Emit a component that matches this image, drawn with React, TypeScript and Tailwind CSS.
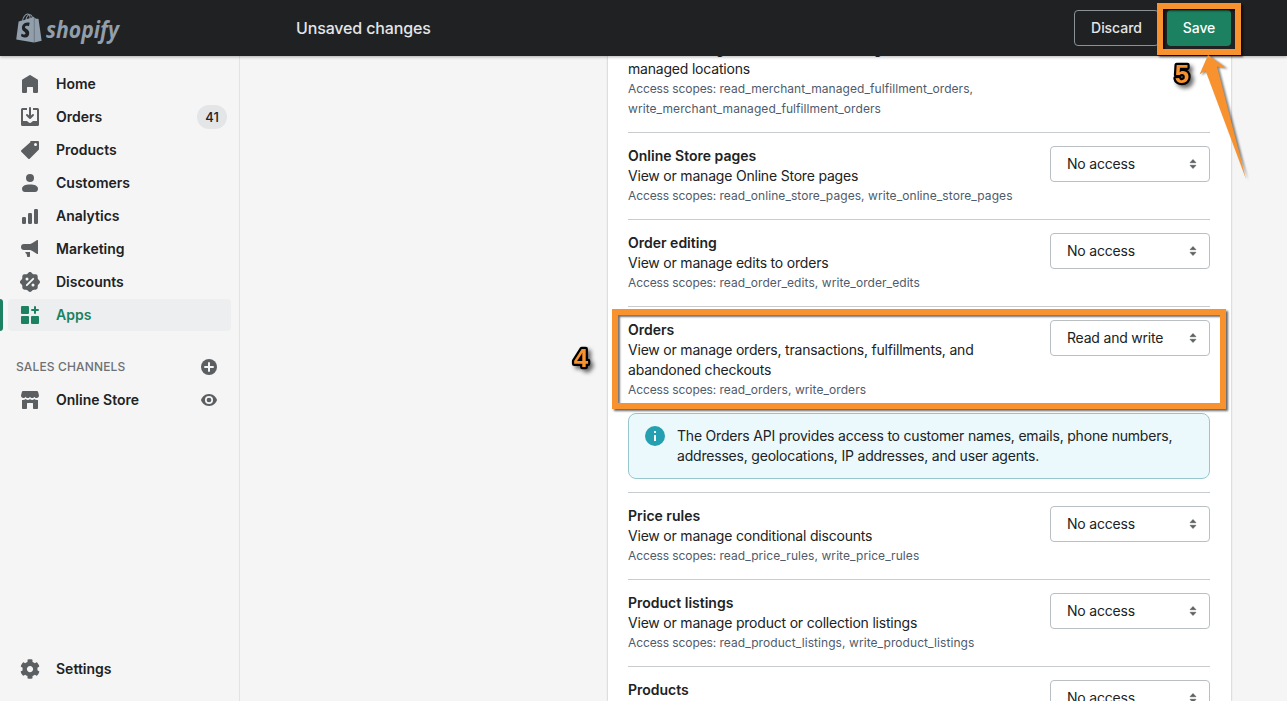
import React from "react";
import { FaCog, FaShopify } from "react-icons/fa";

type IconProps = { children: React.ReactNode };

const Icon = ({ children }: IconProps) => (
  <svg viewBox="0 0 20 20" className="h-5 w-5 shrink-0" fill="currentColor" fillRule="evenodd">
    {children}
  </svg>
);

const icons = {
  home: (
    <Icon>
      <path d="M10.6 1.2l7 4.4c.25.15.4.4.4.7v11.4c0 .7-.6 1.3-1.3 1.3h-2.4c-.7 0-1.3-.6-1.3-1.3v-4.2c0-.3-.2-.5-.5-.5h-5c-.3 0-.5.2-.5.5v4.2c0 .7-.6 1.3-1.3 1.3H3.3C2.6 19 2 18.4 2 17.7V6.3c0-.3.15-.55.4-.7l7-4.4a1.1 1.1 0 0 1 1.2 0z" />
    </Icon>
  ),
  orders: (
    <Icon>
      <path d="M11 1a1 1 0 1 0-2 0v7.586L7.707 7.293a1 1 0 0 0-1.414 1.414l3 3a1 1 0 0 0 1.414 0l3-3a1 1 0 0 0-1.414-1.414L11 8.586V1z" />
      <path d="M3 14V3h4V1H2.5A1.5 1.5 0 0 0 1 2.5v15A1.5 1.5 0 0 0 2.5 19h15a1.5 1.5 0 0 0 1.5-1.5v-15A1.5 1.5 0 0 0 17.5 1H13v2h4v11h-3.5c-.775 0-1.388.662-1.926 1.244l-.11.12A1.994 1.994 0 0 1 10 16a1.994 1.994 0 0 1-1.463-.637l-.111-.12C7.888 14.664 7.275 14 6.5 14H3z" />
    </Icon>
  ),
  products: (
    <Icon>
      <path d="M10.293 1.293A1 1 0 0 1 11 1h7a1 1 0 0 1 1 1v7a1 1 0 0 1-.293.707l-9 9a1 1 0 0 1-1.414 0l-7-7a1 1 0 0 1 0-1.414l9-8zM15.5 6a1.5 1.5 0 1 0 0-3 1.5 1.5 0 0 0 0 3z" />
    </Icon>
  ),
  customers: (
    <Icon>
      <circle cx="10" cy="5" r="4" />
      <path d="M2 15.7C2 13 5.200 11.500 10 11.500s8 1.500 8 4.200c0 1.700-.9 3.300-3 3.300H5c-2.100 0-3-1.600-3-3.300z" />
    </Icon>
  ),
  analytics: (
    <Icon>
      <rect x="2" y="11" width="4" height="7" rx="1.2" />
      <rect x="8" y="7" width="4" height="11" rx="1.2" />
      <rect x="14" y="3" width="4" height="15" rx="1.2" />
    </Icon>
  ),
  marketing: (
    <Icon>
      <path d="M18 1.500v13c0 .5-.5.7-.9.4l-4.300-2.700C11.500 11.300 10.500 11 9 11H4a3 3 0 0 1 0-6h5c1.500 0 2.500-.3 3.800-1.200l4.300-2.700c.4-.3.9 0 .9.400zM5.400 13H10v4.200a.8.8 0 0 1-.8.8H7.800a.8.8 0 0 1-.8-.8c0-1.700-.4-2.400-1.600-3.200V13z" />
    </Icon>
  ),
  discounts: (
    <Icon>
      <path d="M11.566.66a2.189 2.189 0 0 0-3.132 0l-.962.985a2.189 2.189 0 0 1-1.592.66l-1.377-.017a2.189 2.189 0 0 0-2.215 2.215l.016 1.377a2.19 2.19 0 0 1-.66 1.592l-.984.962a2.189 2.189 0 0 0 0 3.132l.985.962c.428.418.667.994.66 1.592l-.017 1.377a2.189 2.189 0 0 0 2.215 2.215l1.377-.016a2.189 2.189 0 0 1 1.592.66l.962.984c.859.88 2.273.88 3.132 0l.962-.985a2.19 2.19 0 0 1 1.592-.66l1.377.017a2.189 2.189 0 0 0 2.215-2.215l-.016-1.377a2.19 2.19 0 0 1 .66-1.592l.984-.962c.88-.859.88-2.273 0-3.132l-.985-.962a2.189 2.189 0 0 1-.66-1.592l.017-1.377a2.189 2.189 0 0 0-2.215-2.215l-1.377.016a2.189 2.189 0 0 1-1.592-.66L11.566.66z" />
      <path d="M6.800 13.200l6.400-6.400" stroke="#f5f5f5" strokeWidth="1.900" strokeLinecap="round" />
      <circle cx="7" cy="7" r="1.500" fill="#f5f5f5" />
      <circle cx="13" cy="13" r="1.500" fill="#f5f5f5" />
    </Icon>
  ),
  apps: (
    <Icon>
      <rect x="1" y="1" width="8" height="8" rx="1" />
      <rect x="1" y="11" width="8" height="8" rx="1" />
      <rect x="11" y="11" width="8" height="8" rx="1" />
      <path d="M15 2v6M12 5h6" stroke="currentColor" strokeWidth="2" strokeLinecap="round" />
    </Icon>
  ),
  store: (
    <Icon>
      <path d="M3.300 1h13.400c.7 0 1.300.5 1.500 1.200L19 5.600C19 7 18 8 16.600 8c-1 0-1.800-.5-2.200-1.300C14 7.500 13.200 8 12.200 8S10.400 7.500 10 6.700C9.600 7.500 8.800 8 7.800 8S6 7.500 5.600 6.700C5.200 7.500 4.400 8 3.400 8 2 8 1 7 1 5.600l.8-3.400C2 1.500 2.600 1 3.300 1z" />
      <path d="M2 10c1.500.3 2.800-.1 3.700-1 1.300 1.200 3 1.200 4.300 0 1.300 1.200 3 1.200 4.300 0 .9.900 2.200 1.300 3.700 1v8c0 .6-.4 1-1 1h-3c-.6 0-1-.4-1-1v-4.500c0-.3-.2-.5-.5-.5h-5c-.3 0-.5.2-.5.500V18c0 .6-.4 1-1 1H3c-.6 0-1-.4-1-1z" />
    </Icon>
  ),
};

const nav = [
  { label: "Home", icon: icons.home },
  { label: "Orders", icon: icons.orders, badge: "41" },
  { label: "Products", icon: icons.products },
  { label: "Customers", icon: icons.customers },
  { label: "Analytics", icon: icons.analytics },
  { label: "Marketing", icon: icons.marketing },
  { label: "Discounts", icon: icons.discounts },
  { label: "Apps", icon: icons.apps, active: true },
];

type Scope = {
  title?: string;
  lines: string[];
  scopes: string[];
  access?: string;
  notice?: string[];
  marker?: string;
};

const scopes: Scope[] = [
  {
    lines: ["View or manage fulfillment orders assigned to merchant-", "managed locations"],
    scopes: ["read_merchant_managed_fulfillment_orders,", "write_merchant_managed_fulfillment_orders"],
  },
  {
    title: "Online Store pages",
    lines: ["View or manage Online Store pages"],
    scopes: ["read_online_store_pages, write_online_store_pages"],
    access: "No access",
  },
  {
    title: "Order editing",
    lines: ["View or manage edits to orders"],
    scopes: ["read_order_edits, write_order_edits"],
    access: "No access",
  },
  {
    title: "Orders",
    lines: ["View or manage orders, transactions, fulfillments, and", "abandoned checkouts"],
    scopes: ["read_orders, write_orders"],
    access: "Read and write",
    notice: [
      "The Orders API provides access to customer names, emails, phone numbers,",
      "addresses, geolocations, IP addresses, and user agents.",
    ],
    marker: "4",
  },
  {
    title: "Price rules",
    lines: ["View or manage conditional discounts"],
    scopes: ["read_price_rules, write_price_rules"],
    access: "No access",
  },
  {
    title: "Product listings",
    lines: ["View or manage product or collection listings"],
    scopes: ["read_product_listings, write_product_listings"],
    access: "No access",
  },
  {
    title: "Products",
    lines: [],
    scopes: [],
    access: "No access",
  },
];

const Marker = ({ n }: { n: string }) => (
  <svg width="36" height="40" viewBox="0 0 36 40" className="overflow-visible">
    <text
      x="18"
      y="27"
      textAnchor="middle"
      className="fill-[#f7922f] stroke-black font-['Liberation_Sans',sans-serif] text-[26px] font-bold [filter:drop-shadow(3px_3px_2px_rgba(0,0,0,0.6))] [paint-order:stroke]"
      strokeWidth="4.500"
      strokeLinejoin="round"
    >
      {n}
    </text>
  </svg>
);

const AccessSelect = ({ value }: { value: string }) => (
  <button className="flex h-9 w-40 shrink-0 items-center justify-between rounded border border-[#babfc3] bg-white pr-3 pl-4 text-left tracking-[-0.2px]">
    <span>{value}</span>
    <svg width="8" height="10" viewBox="0 0 8 10" fill="#5c5f62">
      <path d="M1 3.700h6L4 .5zM1 6.300h6L4 9.500z" stroke="#5c5f62" strokeWidth=".6" strokeLinejoin="round" />
    </svg>
  </button>
);

const ScopeRow = ({ s }: { s: Scope }) => (
  <section className="border-t border-[#c9cccf] py-[13px]">
    <div className="relative flex items-start justify-between">
      <div className="whitespace-nowrap">
        {s.title && <h3 className="font-semibold">{s.title}</h3>}
        {s.lines.map((l) => (
          <p key={l} className="tracking-[-0.2px]">
            {l}
          </p>
        ))}
        <div className="text-xs leading-5 tracking-[0.07px] text-[#4f5b6b]">
          {s.scopes.map((l, i) => (
            <p key={l}>
              {i === 0 && <span className="tracking-[-0.1px]">Access scopes: </span>}
              {l}
            </p>
          ))}
        </div>
      </div>
      {s.access && <AccessSelect value={s.access} />}
      {s.marker && (
        <>
          <div className="pointer-events-none absolute -top-[11px] -left-4 z-10 h-[100px] w-[614px] border-6 border-[#f7922f] shadow-[2px_2px_2px_rgba(0,0,0,0.6),inset_2px_2px_2px_rgba(0,0,0,0.55)]" />
          <div className="absolute top-5 -left-[65px]">
            <Marker n={s.marker} />
          </div>
        </>
      )}
    </div>
    {s.notice && (
      <div className="mt-[13px] flex gap-3 rounded-lg border border-[#98c6cd] bg-[#ebf9fc] px-4 py-3">
        <svg width="20" height="20" viewBox="0 0 20 20" className="shrink-0">
          <circle cx="10" cy="10" r="10" fill="#24a0b0" />
          <path d="M9 5h2v2H9zM9 9h2v6H9z" fill="#fff" />
        </svg>
        <div className="tracking-[-0.2px] whitespace-nowrap">
          {s.notice.map((l) => (
            <p key={l}>{l}</p>
          ))}
        </div>
      </div>
    )}
  </section>
);

export default function App() {
  return (
    <div className="flex h-[701px] w-[1287px] flex-col overflow-hidden bg-[#f5f5f5] font-['Inter',sans-serif] text-sm leading-5 text-[#202223]">
      <header className="relative z-20 flex h-14 shrink-0 items-center bg-[#202123] pr-14 pl-4 text-[#e3e5e7] shadow-[0_1px_3px_rgba(0,0,0,0.3)]">
        <div className="flex w-[280px] items-center gap-1 text-[#919eab]">
          <svg width="26" height="30" viewBox="0 0 448 512" preserveAspectRatio="none">
            <path d="M298 80h22v420h-22z" fill="#75818d" />
            <FaShopify className="h-[512px] w-[448px]" />
          </svg>
          <svg width="76" height="36" viewBox="0 0 76 36" className="overflow-visible">
            <text
              x="0"
              y="27.500"
              textLength="73"
              lengthAdjust="spacingAndGlyphs"
              fill="currentColor"
              className="font-['Open_Sans',sans-serif] text-[24px] font-bold italic"
            >
              shopify
            </text>
          </svg>
        </div>
        <h1 className="flex-1 text-base font-medium tracking-[-0.15px]">Unsaved changes</h1>
        <div className="flex gap-2">
          <button className="h-9 w-[85px] rounded border border-[#8c9196] font-medium tracking-[-0.05px]">Discard</button>
          <div className="relative">
            <button className="h-9 w-16 rounded bg-[#1b8160] font-medium tracking-[-0.05px] text-white">Save</button>
            <div className="pointer-events-none absolute -top-[7px] -left-[10px] h-[52px] w-[84px] border-6 border-[#f7922f] shadow-[2px_2px_2px_rgba(0,0,0,0.6),inset_2px_2px_2px_rgba(0,0,0,0.55)]" />
            <div className="absolute top-[46px] -left-[3px]">
              <Marker n="5" />
            </div>
            <svg
              width="52"
              height="126"
              viewBox="0 0 52 126"
              className="absolute top-[45px] left-[31px] [filter:drop-shadow(2px_1px_1px_rgba(0,0,0,0.5))]"
            >
              <path d="M10 0L28 13l-9-1.500L48 124 7.500 15.500 1.500 19.500z" fill="#f7922f" />
            </svg>
          </div>
        </div>
      </header>

      <div className="flex min-h-0 flex-1">
        <aside className="flex w-60 shrink-0 flex-col border-r border-[#e1e3e5] pt-3 font-semibold">
          <nav className="flex flex-col gap-px">
            {nav.map((n) => (
              <div key={n.label} className="flex h-8 items-center">
                <span className={n.active ? "h-8 w-[3px] rounded-r bg-[#1b8160]" : "w-[3px]"} />
                <a
                  className={
                    n.active
                      ? "ml-[5px] flex h-8 w-[223px] items-center gap-4 rounded bg-[#edeeef] pl-3 text-[#1b8160]"
                      : "ml-[5px] flex h-8 w-[223px] items-center gap-4 pl-3"
                  }
                >
                  <span className={n.active ? "" : "text-[#5c5f62]"}>{n.icon}</span>
                  <span>{n.label}</span>
                  {n.badge && (
                    <span className="mr-1 ml-auto flex h-6 w-[30px] items-center justify-center rounded-full bg-[#e4e5e7] text-[13px] font-medium">
                      {n.badge}
                    </span>
                  )}
                </a>
              </div>
            ))}
          </nav>
          <div className="mt-[26px] flex h-5 items-center justify-between pr-[22px] pl-4 text-xs font-medium tracking-[0.15px] text-[#6d7175]">
            <span>SALES CHANNELS</span>
            <svg width="16" height="16" viewBox="0 0 16 16">
              <circle cx="8" cy="8" r="8" fill="#5c5f62" />
              <path d="M8 4v8M4 8h8" stroke="#f5f5f5" strokeWidth="2" strokeLinecap="round" />
            </svg>
          </div>
          <div className="mt-[7px] flex h-8 items-center gap-4 pr-[22px] pl-5">
            <span className="text-[#5c5f62]">{icons.store}</span>
            <span className="flex-1">Online Store</span>
            <svg width="16" height="12" viewBox="0 0 16 12">
              <path d="M8 0C3.500 0 .8 3.500 0 6c.8 2.500 3.500 6 8 6s7.200-3.500 8-6c-.8-2.500-3.500-6-8-6z" fill="#5c5f62" />
              <circle cx="8" cy="6" r="3.200" fill="none" stroke="#f5f5f5" strokeWidth="1.700" />
            </svg>
          </div>
          <div className="mt-auto mb-4 flex h-8 items-center gap-4 pl-5">
            <FaCog className="h-5 w-5 text-[#5c5f62]" />
            <span>Settings</span>
          </div>
        </aside>

        <main className="flex min-w-0 flex-1 justify-end overflow-hidden pr-14">
          <div className="w-[623px] bg-white pr-[21px] pl-5 shadow-[0_0_2px_rgba(0,0,0,0.3)]">
            <div className="-mt-[31px]">
              {scopes.map((s) => (
                <ScopeRow key={s.scopes[0] ?? s.title} s={s} />
              ))}
            </div>
          </div>
        </main>
      </div>
    </div>
  );
}
